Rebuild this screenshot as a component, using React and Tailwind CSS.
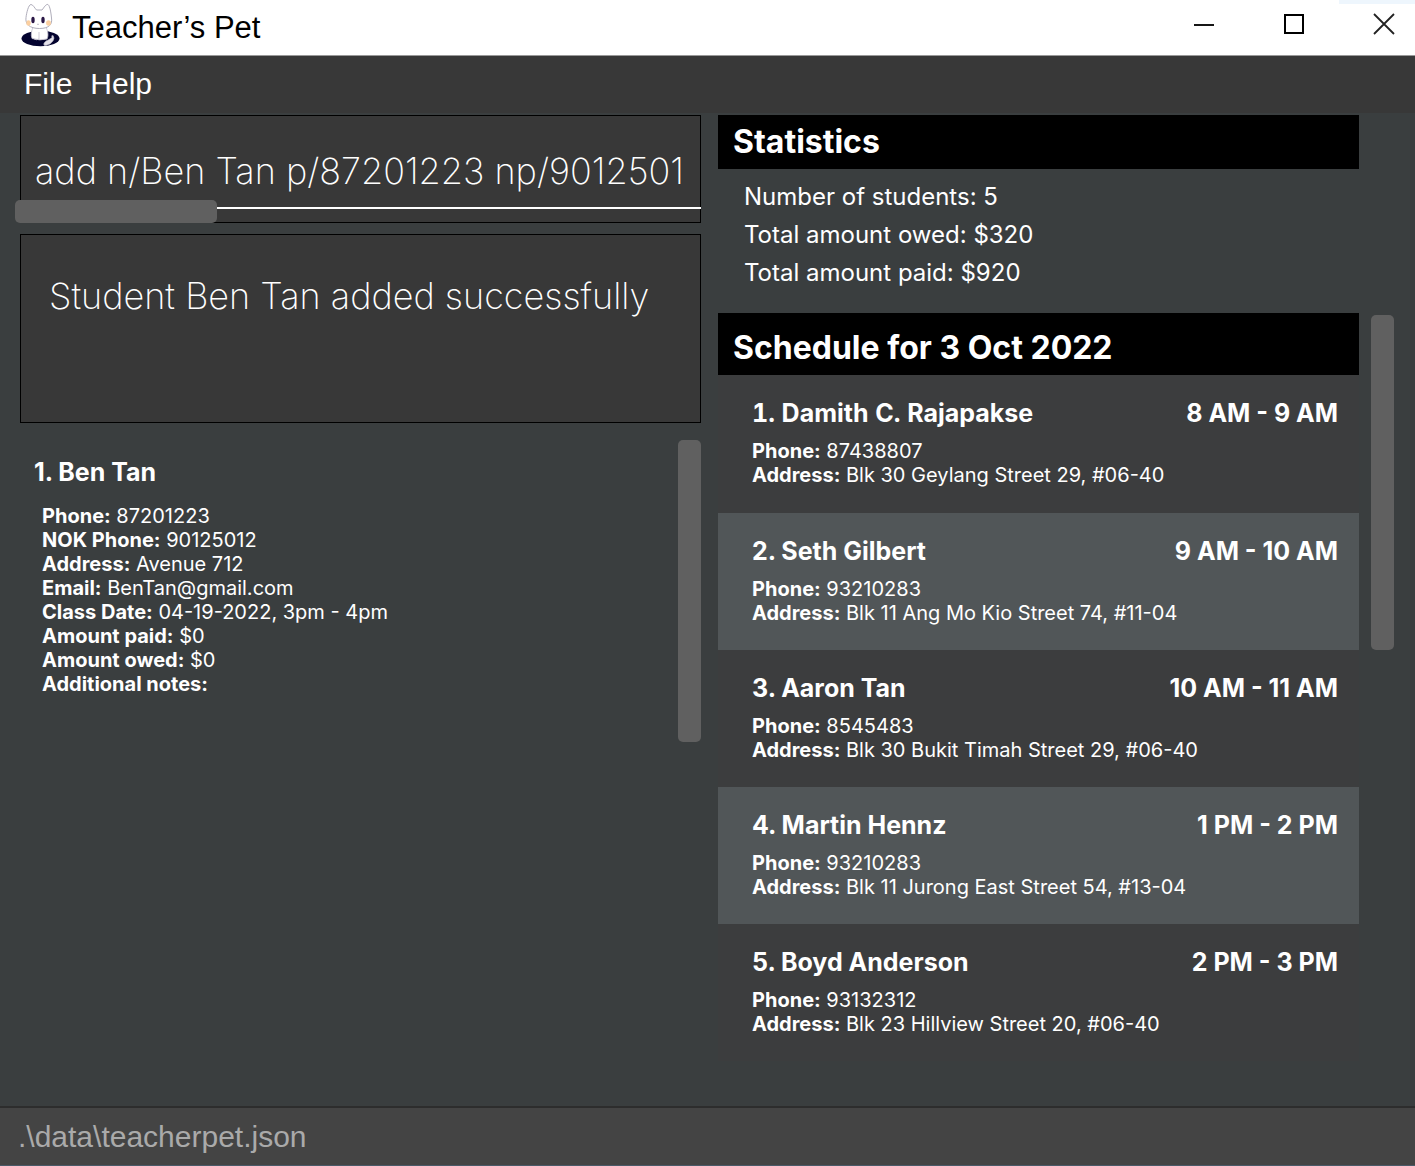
const LESSONS = [
  { name: "Damith C. Rajapakse", time: "8 AM - 9 AM", phone: "87438807", address: "Blk 30 Geylang Street 29, #06-40" },
  { name: "Seth Gilbert", time: "9 AM - 10 AM", phone: "93210283", address: "Blk 11 Ang Mo Kio Street 74, #11-04" },
  { name: "Aaron Tan", time: "10 AM - 11 AM", phone: "8545483", address: "Blk 30 Bukit Timah Street 29, #06-40" },
  { name: "Martin Hennz", time: "1 PM - 2 PM", phone: "93210283", address: "Blk 11 Jurong East Street 54, #13-04" },
  { name: "Boyd Anderson", time: "2 PM - 3 PM", phone: "93132312", address: "Blk 23 Hillview Street 20, #06-40" },
];

const DETAILS = [
  ["Phone:", "87201223"],
  ["NOK Phone:", "90125012"],
  ["Address:", "Avenue 712"],
  ["Email:", "BenTan@gmail.com"],
  ["Class Date:", "04-19-2022, 3pm - 4pm"],
  ["Amount paid:", "$0"],
  ["Amount owed:", "$0"],
  ["Additional notes:", ""],
];

function CatLogo() {
  return (
    <svg width="42" height="46" viewBox="0 0 42 46" aria-hidden="true">
      <ellipse cx="20.5" cy="35.5" rx="19" ry="7.8" fill="#03032f" />
      <path
        d="M13 24C11.500 28 10.500 32 12 35.500Q20 38 27 36C29 32 27.500 27 25.500 23Z"
        fill="#fff"
        stroke="#c3bfcd"
        strokeWidth="0.800"
      />
      <path
        d="M6 14.500C6.500 10 8.500 1.500 11 1.500C13 1.500 15 5.500 16.500 7H22C24 4.500 26 0.800 28 1.500C30 3 31 10 31.500 15C32.500 21 29.500 25.500 19.500 25.500C9.500 25.500 5 21 6 14.500Z"
        fill="#fff"
        stroke="#9b98a8"
        strokeWidth="0.800"
      />
      <ellipse cx="8.500" cy="20" rx="2.200" ry="2.800" fill="#fbcfa0" />
      <ellipse cx="28.500" cy="20" rx="2.400" ry="2.800" fill="#fbcfa0" />
      <ellipse cx="13" cy="17" rx="1.700" ry="3.200" fill="#2a1746" />
      <ellipse cx="23" cy="17" rx="1.700" ry="3.200" fill="#2a1746" />
      <path d="M17 21L18 21.600L19 21" fill="none" stroke="#a9a5b5" strokeWidth="0.700" />
      <path d="M19 29V36M14 36Q16 37.500 19 36" fill="none" stroke="#c3bfcd" strokeWidth="0.800" />
      <path
        d="M24 40Q23 43 26 42.500L30 41L33 38Q35 35 33 32.500Q31 32 32 34.500L29 36.500L26 38Z"
        fill="#e4e2ea"
        stroke="#aaa7ba"
        strokeWidth="0.600"
      />
    </svg>
  );
}

function TitleBar() {
  return (
    <header className="relative flex h-14 items-center border-b border-[#999] bg-white pl-5 pr-5 text-black">
      <div className="absolute right-0 top-0 h-1 w-19 bg-[#eef6fd]" />
      <div className="mb-1">
        <CatLogo />
      </div>
      <h1 className="ml-2.5 font-['Liberation_Sans',sans-serif] text-[31px] leading-10">Teacher’s Pet</h1>
      <div className="mb-2 ml-auto flex items-center gap-[68px]">
        <button type="button" aria-label="Minimize">
          <svg className="block" width="22" height="22" viewBox="0 0 22 22">
            <path d="M1 12H21" stroke="#161616" strokeWidth="2" />
          </svg>
        </button>
        <button type="button" aria-label="Maximize">
          <svg className="block" width="22" height="22" viewBox="0 0 22 22">
            <path d="M2 2H20V20H2Z" fill="none" stroke="#000" strokeWidth="2" />
          </svg>
        </button>
        <button type="button" aria-label="Close">
          <svg className="block" width="22" height="22" viewBox="0 0 22 22">
            <path d="M1 1L21 21M21 1L1 21" stroke="#222" strokeWidth="1.800" />
          </svg>
        </button>
      </div>
    </header>
  );
}

function Field({ label, value }) {
  return (
    <div className="text-xl leading-6">
      <dt className="inline font-bold">{label}</dt> <dd className="inline font-normal">{value}</dd>
    </div>
  );
}

function CommandPanel() {
  return (
    <section className="flex flex-col">
      <div className="relative h-27 border border-black bg-[#383838]">
        <input
          type="text"
          aria-label="Command"
          defaultValue="add n/Ben Tan p/87201223 np/9012501"
          className="mt-[27px] block h-14 w-full bg-transparent pl-3.5 text-4xl font-extralight outline-none"
        />
        <div className="absolute -right-px bottom-[13px] left-0 h-0.5 bg-white" />
        <div className="absolute -bottom-px -left-1.5 h-[23px] w-[202px] rounded-[5px] bg-[#606060]" />
      </div>
      <output className="mt-[11px] block h-[189px] border border-black bg-[#383838] px-7 pt-[35px] text-4xl leading-[52px] font-extralight">
        Student Ben Tan added successfully
      </output>
      <div className="mt-[17px] flex justify-between">
        <article className="pl-3.5 pt-4">
          <h2 className="text-[25px] leading-8 font-bold">1. Ben Tan</h2>
          <dl className="mt-4 pl-2">
            {DETAILS.map(([label, value]) => (
              <Field key={label} label={label} value={value} />
            ))}
          </dl>
        </article>
        <div className="h-[302px] w-[23px] rounded-[5px] bg-[#606060]" />
      </div>
    </section>
  );
}

function SidePanel() {
  return (
    <div className="flex gap-3">
      <div className="flex-1">
        <section>
          <h2 className="bg-black px-[15px] py-[7px] text-[32px] leading-10 font-bold">Statistics</h2>
          <div className="px-[26px] pt-[9px] pb-[21px] text-2xl leading-[38px] font-normal">
            <p>Number of students: 5</p>
            <p>Total amount owed: $320</p>
            <p>Total amount paid: $920</p>
          </div>
        </section>
        <section>
          <h2 className="bg-black px-[15px] pt-[15px] pb-[7px] text-[32px] leading-10 font-bold">Schedule for 3 Oct 2022</h2>
          <ol>
            {LESSONS.map((lesson, i) => (
              <li
                key={lesson.name}
                className="group h-[137px] bg-[#3c3d3e] pt-[22px] pr-[21px] pl-[34px] first:h-[138px] even:bg-[#515658]"
              >
                <div className="flex justify-between text-[25px] leading-8 font-bold">
                  <h3 className="group-first:tabular-nums">
                    {i + 1}. {lesson.name}
                  </h3>
                  <span>{lesson.time}</span>
                </div>
                <dl className="mt-2.5">
                  <Field label="Phone:" value={lesson.phone} />
                  <Field label="Address:" value={lesson.address} />
                </dl>
              </li>
            ))}
          </ol>
        </section>
      </div>
      <div className="mt-50 h-[335px] w-[23px] rounded-[5px] bg-[#606060]" />
    </div>
  );
}

export default function App() {
  return (
    <div className="flex min-h-screen flex-col bg-[#3a3e3f] font-['Inter',sans-serif] text-white [font-optical-sizing:none]">
      <TitleBar />
      <nav className="flex h-[57px] items-center gap-[18px] bg-[#383838] px-6 pb-0.5 font-['Liberation_Sans',sans-serif] text-[30px] leading-10">
        <button type="button">File</button>
        <button type="button">Help</button>
      </nav>
      <main className="grid flex-1 grid-cols-[681fr_676fr] gap-[17px] pt-0.5 pr-[21px] pb-10 pl-5">
        <CommandPanel />
        <SidePanel />
      </main>
      <footer className="h-15 border-t-2 border-b border-t-[#2d2d2d] border-b-[#4a5a68] bg-[#444] px-[18px] pt-[9px] font-['Liberation_Sans',sans-serif] text-[30px] leading-10 text-[#aaa]">
        .\data\teacherpet.json
      </footer>
    </div>
  );
}
